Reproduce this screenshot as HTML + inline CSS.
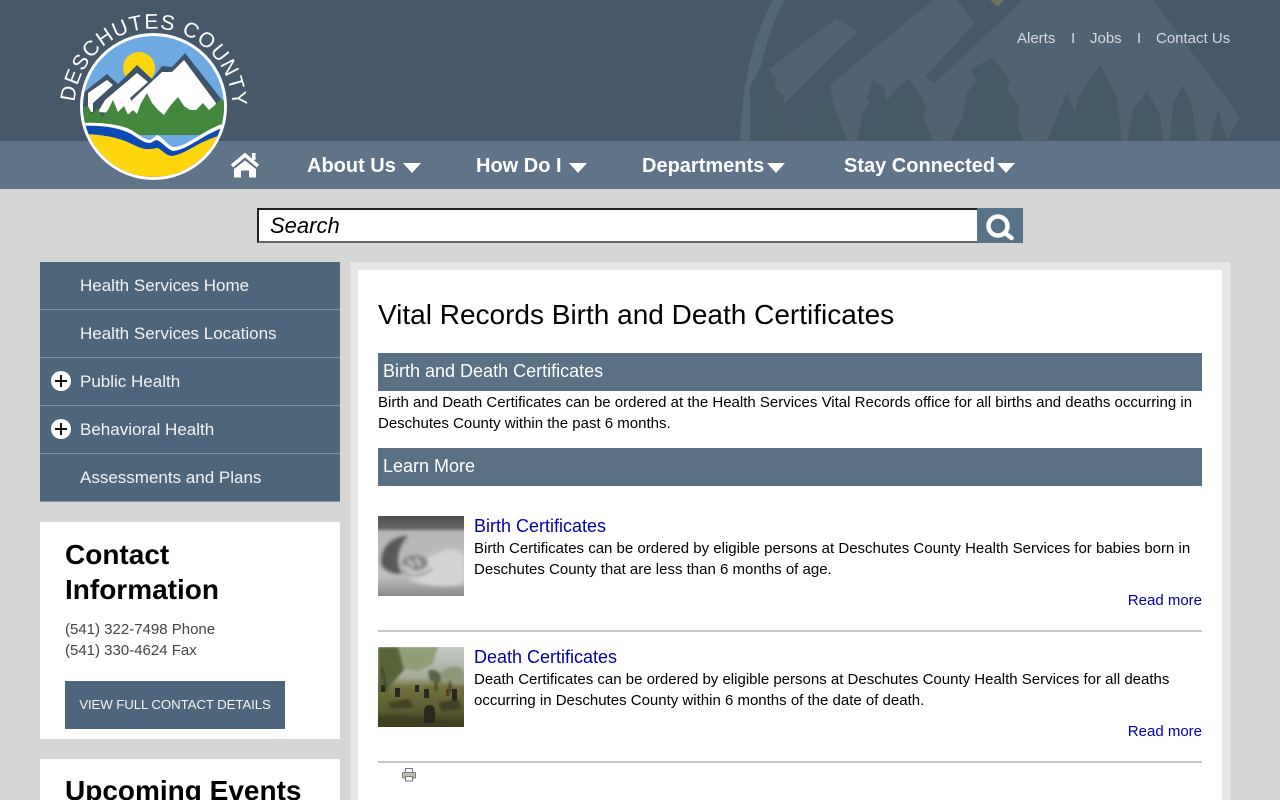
<!DOCTYPE html>
<html lang="en"><head><meta charset="utf-8"><title>Vital Records Birth and Death Certificates</title>
<style>
*{box-sizing:border-box}
html,body{margin:0;padding:0;width:1280px;height:800px;overflow:hidden;background:#d6d6d4;font-family:"Liberation Sans",sans-serif;color:#000}
.a{position:absolute;white-space:nowrap}
#stage{position:absolute;left:0;top:0;width:1280px;height:800px;overflow:hidden}
a{text-decoration:none}
.nav{color:#fff;font-weight:bold;font-size:20px;line-height:24px;top:154px}
.tri{position:absolute;top:163px;width:0;height:0;border-left:9px solid transparent;border-right:9px solid transparent;border-top:10px solid #fff}
.top{color:#d5dae0;font-size:15px;line-height:18px;top:30px}
.side{left:40px;width:300px;height:48px;background:#4d667c;border-bottom:1px solid #8195a6;color:#f2f4f6;font-size:17px;line-height:47px;padding-left:40px}
.plus{position:absolute;left:51px;width:20px;height:20px;border-radius:50%;background:#fff}
.plus:before{content:"";position:absolute;left:4px;top:9px;width:12px;height:2px;background:#111}
.plus:after{content:"";position:absolute;left:9px;top:4px;width:2px;height:12px;background:#111}
.bar{left:378px;width:824px;height:38px;background:#5a7085;color:#fff;font-size:18px;line-height:37px;padding-left:5px}
.p{left:378px;font-size:15px;line-height:21px}
.l{color:#0000a8}
.h3{font-size:18px;line-height:22px;color:#0000a8}
.hr{left:378px;width:824px;height:2px;background:#c8c8c8}
</style></head><body><div id="stage">

<div class="a" style="left:0;top:0;width:1280px;height:141px;background:#46586a"></div>
<svg class="a" style="left:740px;top:0" width="540" height="141" viewBox="0 0 540 141">
<path d="M0 141C2 85 12 38 33 0H44C24 40 14 88 12 141Z" fill="#53677a"/>
<path d="M25 72L97 18L117 32L45 103Z" fill="#516272"/>
<path d="M90 85L193 0H217L235 23L185 77L195 83L283 0H413L500 117L487 141H100Z" fill="#516272"/>
<path d="M250 0H264L258 7Z" fill="#6a7460"/>
<g fill="#465a66">
<path d="M10 141V87L23 62L37 80L33 87L45 97L40 103L57 141Z"/>
<path d="M60 141L57 117L53 115L70 100L80 88L93 103L107 141Z"/>
<path d="M117 141L123 113L130 103L127 97L133 80L143 87L147 100L163 83L168 78L177 90L187 107L183 117L193 141Z"/>
<path d="M210 141L223 117L227 93L237 80L230 70L252 57L270 80L267 90L280 107L277 123L283 141Z"/>
<path d="M307 141L317 117L327 92L335 113L338 97L360 65L377 97L382 141Z"/>
<path d="M387 141L393 110L407 92L420 113L423 141Z"/>
<path d="M430 141L433 103L443 85L452 107L457 141Z"/>
<path d="M470 141L478 108L487 141Z"/>
</g>
</svg>

<div class="a" style="left:0;top:141px;width:1280px;height:48px;background:#5f7389"></div>

<div class="a top" style="left:1017px">Alerts</div>
<div class="a top" style="left:1071px">I</div>
<div class="a top" style="left:1090px">Jobs</div>
<div class="a top" style="left:1137px">I</div>
<div class="a top" style="left:1156px">Contact Us</div>

<svg class="a" style="left:50px;top:5px" width="220" height="185" viewBox="50 5 220 185">
<defs>
<clipPath id="c"><circle cx="153.500" cy="106.500" r="70.500"/></clipPath>
<path id="arc" d="M74.700 102A79 79 0 0 1 232.300 102"/>
</defs>
<text font-family="Liberation Sans" font-size="21" fill="#fff" letter-spacing="1.100"><textPath href="#arc" startOffset="0">DESCHUTES COUNTY</textPath></text>
<circle cx="153.500" cy="106.500" r="73.500" fill="#fff"/>
<g clip-path="url(#c)">
<rect x="80" y="33" width="150" height="150" fill="#6fa9e2"/>
<circle cx="139" cy="68" r="16" fill="#ffd50d"/>
<path d="M83 93L107 74L118 84L137 65L152 79L162 66L172 67L185 53L226 105V125H83Z" fill="#3f5468"/>
<path d="M88 93L107 80L113 85L93 103V112H88Z" fill="#fff"/>
<path d="M98 112L105 100L137 73L148 82L130 98L140 115Z" fill="#fff"/>
<path d="M132 100L162 72L172 72L184 60L216 103L210 122H136Z" fill="#fff"/>
<path d="M80 108L88 106L92 114L98 108L102 117L108 110L113 100L118 112L124 106L128 115L133 110L137 114L141 103L147 93L152 103L158 110L164 115L170 106L178 97L184 106L190 110L196 110L203 103L209 110L214 106L220 100L228 100V135H80Z" fill="#43873f"/>
<path d="M80 123C100 122 115 124 127 128C135 131 142 139 150 140C153 139 155 136 157 135C163 137 168 146 173 147C182 147 190 141 197 137C205 132 215 126 230 121V190H80Z" fill="#fff"/>
<path d="M80 126C100 125 115 127 127 132C135 135 142 143 150 143C153 142 155 140 157 140C162 142 167 149 173 151C182 150 190 145 197 141C205 136 215 130 230 125V190H80Z" fill="#0c4bb3"/>
<path d="M80 134C100 134 115 137 125 141C135 145 142 150 150 149C153 149 156 148 158 148C163 151 167 156 172 156C180 155 190 149 197 145C205 141 215 136 230 133V190H80Z" fill="#ffd50d"/>
</g>
<path d="M232 166L245 155L258 166" fill="none" stroke="#fff" stroke-width="3.600"/>
<path d="M252 153H255.500V160H252Z" fill="#fff"/>
<path d="M245 160.500L256 169V177.500H249V170.500H241V177.500H234V169Z" fill="#fff"/>
</svg>

<div class="a nav" style="left:307px">About Us</div><div class="tri" style="left:403px"></div>
<div class="a nav" style="left:476px">How Do I</div><div class="tri" style="left:569px"></div>
<div class="a nav" style="left:642px">Departments</div><div class="tri" style="left:767px"></div>
<div class="a nav" style="left:844px">Stay Connected</div><div class="tri" style="left:997px"></div>

<div class="a" style="left:257px;top:208px;width:721px;height:35px;background:#fff;border:2px solid #222;border-right:0;border-bottom-color:#666"></div>
<div class="a" style="left:270px;top:212px;font-size:22px;line-height:27px;font-style:italic;color:#000">Search</div>
<div class="a" style="left:977px;top:208px;width:46px;height:35px;background:#587288"></div>
<svg class="a" style="left:977px;top:208px" width="46" height="35" viewBox="0 0 46 35"><circle cx="21" cy="18" r="9.500" fill="none" stroke="#fff" stroke-width="4.500"/><path d="M28 25L34.500 30" stroke="#fff" stroke-width="4.500" stroke-linecap="round"/></svg>

<div class="a side" style="top:262px">Health Services Home</div>
<div class="a side" style="top:310px">Health Services Locations</div>
<div class="a side" style="top:358px">Public Health</div>
<div class="a side" style="top:406px">Behavioral Health</div>
<div class="a side" style="top:454px">Assessments and Plans</div>
<div class="plus" style="top:371px"></div>
<div class="plus" style="top:419px"></div>

<div class="a" style="left:40px;top:522px;width:300px;height:217px;background:#fff"></div>
<div class="a" style="left:65px;top:537px;font-size:28px;line-height:36px;font-weight:bold">Contact</div>
<div class="a" style="left:65px;top:572px;font-size:28px;line-height:36px;font-weight:bold">Information</div>
<div class="a" style="left:65px;top:619px;font-size:15px;line-height:21px;color:#444">(541) 322-7498 Phone<br>(541) 330-4624 Fax</div>
<div class="a" style="left:65px;top:681px;width:220px;height:48px;background:#4d667c;color:#f2f4f6;font-size:13.300px;line-height:47px;text-align:center;letter-spacing:-.12px">VIEW FULL CONTACT DETAILS</div>
<div class="a" style="left:40px;top:759px;width:300px;height:60px;background:#fff"></div>
<div class="a" style="left:65px;top:773px;font-size:28px;line-height:36px;font-weight:bold">Upcoming Events</div>

<div class="a" style="left:350px;top:262px;width:880px;height:560px;background:#e6e6e4"></div>
<div class="a" style="left:358px;top:270px;width:864px;height:550px;background:#fff"></div>

<div class="a" style="left:378px;top:298px;font-size:28px;line-height:34px">Vital Records Birth and Death Certificates</div>
<div class="a bar" style="top:353px">Birth and Death Certificates</div>
<div class="a p" style="top:392px">Birth and Death Certificates can be ordered at the Health Services Vital Records office for all births and deaths occurring in<br>Deschutes County within the past 6 months.</div>
<div class="a bar" style="top:448px">Learn More</div>

<svg class="a" style="left:378px;top:516px" width="86" height="80" viewBox="0 0 86 80">
<defs>
<linearGradient id="b" x1="0" y1="0" x2="0" y2="1"><stop offset="0" stop-color="#4f4f4f"/><stop offset=".15" stop-color="#666"/><stop offset=".2" stop-color="#b5b5b5"/><stop offset=".75" stop-color="#c0c0c0"/><stop offset="1" stop-color="#8a8a8a"/></linearGradient>
<filter id="bl" x="-10%" y="-10%" width="120%" height="120%"><feGaussianBlur stdDeviation="1.800"/></filter>
<filter id="bs" x="-10%" y="-10%" width="120%" height="120%"><feGaussianBlur stdDeviation="1.200"/></filter>
</defs>
<rect width="86" height="80" fill="url(#b)"/>
<g filter="url(#bl)">
<path d="M28 60C38 48 56 38 70 33C78 33 86 36 86 40V68C70 72 48 70 38 66Z" fill="#d4d4d4"/>
<path d="M3 44C5 28 16 20 30 20C24 28 20 36 20 44C20 50 22 54 24 58C12 58 3 54 3 44Z" fill="#585858"/>
<ellipse cx="35" cy="34" rx="12" ry="12" fill="#b8b8b8"/>
<ellipse cx="37" cy="47" rx="13" ry="8" fill="#858585"/>
<path d="M30 44L36 50M38 42L42 50M26 50L34 54" stroke="#dedede" stroke-width="2"/>
<path d="M24 54C30 62 44 62 54 52" fill="none" stroke="#909090" stroke-width="2"/>
</g>
</svg>
<div class="a h3" style="left:474px;top:515px">Birth Certificates</div>
<div class="a" style="left:474px;top:538px;font-size:15px;line-height:21px">Birth Certificates can be ordered by eligible persons at Deschutes County Health Services for babies born in<br>Deschutes County that are less than 6 months of age.</div>
<div class="a l" style="right:78px;top:591px;font-size:15px;line-height:20px">Read more</div>
<div class="a hr" style="top:630px"></div>

<svg class="a" style="left:378px;top:647px" width="86" height="80" viewBox="0 0 86 80">
<defs><linearGradient id="d" x1="0" y1="0" x2="0" y2="1"><stop offset="0" stop-color="#c3cac6"/><stop offset=".38" stop-color="#a6ab98"/><stop offset=".5" stop-color="#72733f"/><stop offset=".8" stop-color="#595a2f"/><stop offset="1" stop-color="#383a1e"/></linearGradient></defs>
<rect width="86" height="80" fill="url(#d)"/>
<g filter="url(#bs)">
<path d="M0 0H34L30 18L18 32L8 44H0Z" fill="#56633a"/>
<path d="M20 0H60L54 18L40 24L26 22Z" fill="#8f9e78"/>
<path d="M62 28C66 18 84 16 86 26V38L70 36Z" fill="#8d9879"/>
<path d="M50 24C58 20 66 28 62 36L52 34Z" fill="#566645"/>
<path d="M72 34V46M58 34V44M4 20L8 44" stroke="#3a3424" stroke-width="2"/>
<path d="M0 70C20 66 40 72 86 74V80H0ZM10 56L30 52L36 60L14 62ZM60 56L80 52L84 62L64 64Z" fill="#3f3f22"/>
</g>
<g fill="#2b2820">
<path d="M46 76V64C46 56 57 56 57 64V76Z"/>
<rect x="17" y="41" width="5" height="9"/>
<rect x="3" y="38" width="4" height="7"/>
<rect x="37" y="38" width="4" height="7"/>
<rect x="46" y="42" width="5" height="9"/>
<rect x="74" y="42" width="5" height="12"/>
<rect x="68" y="42" width="3" height="7" fill="#5a3c28"/>
</g>
</svg>
<div class="a h3" style="left:474px;top:646px">Death Certificates</div>
<div class="a" style="left:474px;top:669px;font-size:15px;line-height:21px">Death Certificates can be ordered by eligible persons at Deschutes County Health Services for all deaths<br>occurring in Deschutes County within 6 months of the date of death.</div>
<div class="a l" style="right:78px;top:722px;font-size:15px;line-height:20px">Read more</div>
<div class="a hr" style="top:761px"></div>

<svg class="a" style="left:402px;top:768px" width="14" height="14" viewBox="0 0 14 14">
<rect x="3.500" y=".5" width="7" height="4" fill="#fff" stroke="#777"/>
<rect x=".5" y="4.500" width="13" height="5.500" rx="1" fill="#bdbdb0" stroke="#777"/>
<rect x="3.500" y="8.500" width="7" height="4.500" fill="#fff" stroke="#777"/>
</svg>
</div></body></html>
